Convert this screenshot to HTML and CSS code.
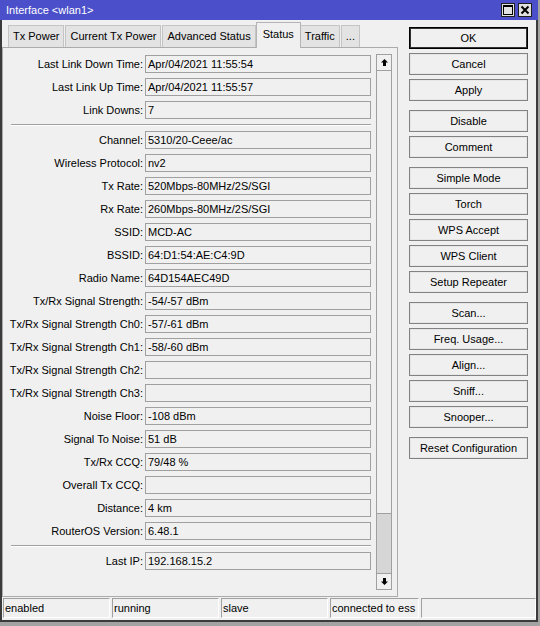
FILE: index.html
```html
<!DOCTYPE html>
<html lang="en">
	<head>
		<meta charset="UTF-8" />
		<title>Interface &lt;wlan1&gt;</title>
		<link rel="stylesheet" href="styles.css">
	</head>
	<body>
		<div class="window">
			<div class="titlebar">
				<span class="title">Interface &lt;wlan1&gt;</span>
				<div class="title-buttons">
					<span class="title-btn">
						<svg width="10" height="10" viewBox="0 0 10 10"><rect x="0.5" y="0.5" width="9" height="9" fill="none" stroke="#000" /><rect x="0" y="0" width="10" height="2" fill="#000" /></svg>
					</span>
					<span class="title-btn">
						<svg width="10" height="10" viewBox="0 0 10 10"><path d="M1.5 1.5 L8.5 8.5 M8.5 1.5 L1.5 8.5" stroke="#000" stroke-width="2" /></svg>
					</span>
				</div>
			</div>

			<div class="frame">
				<div class="main">
					<div class="left">
						<div class="tabs">
							<div class="tab">Tx Power</div>
							<div class="tab">Current Tx Power</div>
							<div class="tab">Advanced Status</div>
							<div class="tab active">Status</div>
							<div class="tab">Traffic</div>
							<div class="tab">...</div>
						</div>

						<div class="panel">
							<div class="fields">
								<div class="row"><label>Last Link Down Time:</label><div class="value">Apr/04/2021 11:55:54</div></div>
								<div class="row"><label>Last Link Up Time:</label><div class="value">Apr/04/2021 11:55:57</div></div>
								<div class="row"><label>Link Downs:</label><div class="value">7</div></div>
								<div class="sep"></div>
								<div class="row"><label>Channel:</label><div class="value">5310/20-Ceee/ac</div></div>
								<div class="row"><label>Wireless Protocol:</label><div class="value">nv2</div></div>
								<div class="row"><label>Tx Rate:</label><div class="value">520Mbps-80MHz/2S/SGI</div></div>
								<div class="row"><label>Rx Rate:</label><div class="value">260Mbps-80MHz/2S/SGI</div></div>
								<div class="row"><label>SSID:</label><div class="value">MCD-AC</div></div>
								<div class="row"><label>BSSID:</label><div class="value">64:D1:54:AE:C4:9D</div></div>
								<div class="row"><label>Radio Name:</label><div class="value">64D154AEC49D</div></div>
								<div class="row"><label>Tx/Rx Signal Strength:</label><div class="value">-54/-57 dBm</div></div>
								<div class="row"><label>Tx/Rx Signal Strength Ch0:</label><div class="value">-57/-61 dBm</div></div>
								<div class="row"><label>Tx/Rx Signal Strength Ch1:</label><div class="value">-58/-60 dBm</div></div>
								<div class="row"><label>Tx/Rx Signal Strength Ch2:</label><div class="value"></div></div>
								<div class="row"><label>Tx/Rx Signal Strength Ch3:</label><div class="value"></div></div>
								<div class="row"><label>Noise Floor:</label><div class="value">-108 dBm</div></div>
								<div class="row"><label>Signal To Noise:</label><div class="value">51 dB</div></div>
								<div class="row"><label>Tx/Rx CCQ:</label><div class="value">79/48 %</div></div>
								<div class="row"><label>Overall Tx CCQ:</label><div class="value"></div></div>
								<div class="row"><label>Distance:</label><div class="value">4 km</div></div>
								<div class="row"><label>RouterOS Version:</label><div class="value">6.48.1</div></div>
								<div class="sep"></div>
								<div class="row"><label>Last IP:</label><div class="value">192.168.15.2</div></div>
							</div>

							<div class="scrollbar">
								<div class="scroll-btn">
									<svg width="7" height="7" viewBox="0 0 7 7"><path d="M3.5 0 L7 3.5 H5 V7 H2 V3.5 H0 Z" fill="#000" /></svg>
								</div>
								<div class="scroll-thumb"></div>
								<div class="scroll-track"></div>
								<div class="scroll-btn down">
									<svg width="7" height="7" viewBox="0 0 7 7"><path d="M3.5 7 L7 3.5 H5 V0 H2 V3.5 H0 Z" fill="#000" /></svg>
								</div>
							</div>
						</div>
					</div>

					<div class="buttons">
						<div class="group">
							<div class="btn default">OK</div>
							<div class="btn">Cancel</div>
							<div class="btn">Apply</div>
						</div>
						<div class="group">
							<div class="btn">Disable</div>
							<div class="btn">Comment</div>
						</div>
						<div class="group">
							<div class="btn">Simple Mode</div>
							<div class="btn">Torch</div>
							<div class="btn">WPS Accept</div>
							<div class="btn">WPS Client</div>
							<div class="btn">Setup Repeater</div>
						</div>
						<div class="group">
							<div class="btn">Scan...</div>
							<div class="btn">Freq. Usage...</div>
							<div class="btn">Align...</div>
							<div class="btn">Sniff...</div>
							<div class="btn">Snooper...</div>
						</div>
						<div class="group">
							<div class="btn">Reset Configuration</div>
						</div>
					</div>
				</div>

				<div class="statusbar">
					<div class="cell w-107">enabled</div>
					<div class="cell w-107">running</div>
					<div class="cell w-107">slave</div>
					<div class="cell w-89">connected to ess</div>
					<div class="cell w-115"></div>
				</div>
			</div>
		</div>
	</body>
</html>
```

FILE: styles.css
```css
body {
	margin: 0;
	background-color: #a3a3a3;
	font-family: "Liberation Sans", Arial, sans-serif;
	font-size: 11px;
	color: #000;
}

.window {
	width: 538px;
	height: 622px;
	display: flex;
	flex-direction: column;
}

.titlebar {
	height: 20px;
	background-color: #4b4fc9;
	color: #fff;
	display: flex;
	align-items: center;
	justify-content: space-between;
	padding: 0 6px 0 6px;
	box-sizing: border-box;
	flex-shrink: 0;
}

.title-buttons {
	display: flex;
	gap: 3px;
}

.title-btn {
	width: 14px;
	height: 14px;
	box-sizing: border-box;
	background-color: #e1e1e1;
	border: 1px solid #202020;
	display: flex;
	align-items: center;
	justify-content: center;
}

.frame {
	flex: 1;
	background-color: #f0f0f0;
	border: 2px solid #3b3b3b;
	border-top: 0;
	display: flex;
	flex-direction: column;
}

.main {
	display: flex;
	height: 578px;
}

/* tabs + status panel */
.left {
	width: 396px;
	display: flex;
	flex-direction: column;
	padding-top: 2px;
}

.tabs {
	display: flex;
	align-items: flex-end;
	height: 25px;
	padding-left: 6px;
}

.tab {
	height: 22px;
	line-height: 21px;
	padding: 0 4px;
	box-sizing: border-box;
	border: 1px solid #c4c4c4;
	border-bottom: 0;
	background-color: #e3e3e3;
	margin-right: 1px;
	white-space: nowrap;
}

.tab.active {
	height: 26px;
	line-height: 22px;
	padding: 0 6px;
	margin: 0 -1px -1px -1px;
	background-color: #f0f0f0;
	border-color: #b4b4b4;
	position: relative;
	z-index: 1;
}

.panel {
	height: 550px;
	box-sizing: border-box;
	border: 1px solid #ababab;
	display: flex;
	padding: 6px 5px 6px 0;
}

.fields {
	width: 373px;
	padding-top: 1px;
}

.row {
	display: flex;
	align-items: center;
	height: 18px;
	margin-bottom: 5px;
}

.row label {
	width: 140px;
	margin-right: 2px;
	text-align: right;
	white-space: nowrap;
}

.value {
	width: 226px;
	height: 18px;
	box-sizing: border-box;
	border: 1px solid #a0a0a0;
	padding-left: 2px;
	line-height: 16px;
	white-space: nowrap;
}

.sep {
	height: 1px;
	background-color: #a0a0a0;
	border-bottom: 1px solid #fff;
	margin: 0 5px 5px 8px;
}

.scrollbar {
	width: 16px;
	box-sizing: border-box;
	border: 1px solid #a0a0a0;
	display: flex;
	flex-direction: column;
	background-color: #d6d6d6;
}

.scroll-btn {
	height: 15px;
	flex-shrink: 0;
	background-color: #f0f0f0;
	border-bottom: 1px solid #a0a0a0;
	display: flex;
	align-items: center;
	justify-content: center;
}

.scroll-btn.down {
	border-bottom: 0;
	border-top: 1px solid #a0a0a0;
}

.scroll-thumb {
	height: 442px;
	background-color: #f0f0f0;
	border-bottom: 1px solid #a0a0a0;
}

.scroll-track {
	flex: 1;
}

/* right-hand command buttons */
.buttons {
	width: 119px;
	margin: 7px 0 0 11px;
	display: flex;
	flex-direction: column;
	gap: 9px;
}

.group {
	display: flex;
	flex-direction: column;
	gap: 4px;
}

.btn {
	height: 22px;
	box-sizing: border-box;
	border: 1px solid #828282;
	box-shadow: inset 0 0 0 1px #e6e6e6;
	background-color: #f0f0f0;
	display: flex;
	align-items: center;
	justify-content: center;
	white-space: nowrap;
}

.btn.default {
	border: 1px solid #000;
	box-shadow: inset 0 0 0 1px #333;
}

.statusbar {
	display: flex;
	gap: 2px;
	height: 22px;
	padding: 0 0 2px 1px;
	box-sizing: border-box;
}

.cell {
	height: 20px;
	box-sizing: border-box;
	border-top: 1px solid #a0a0a0;
	border-left: 1px solid #a0a0a0;
	border-right: 1px solid #fff;
	border-bottom: 1px solid #fff;
	padding-left: 1px;
	line-height: 18px;
	white-space: nowrap;
}

.w-107 {
	width: 107px;
}

.w-89 {
	width: 89px;
}

.w-115 {
	width: 115px;
}
```
